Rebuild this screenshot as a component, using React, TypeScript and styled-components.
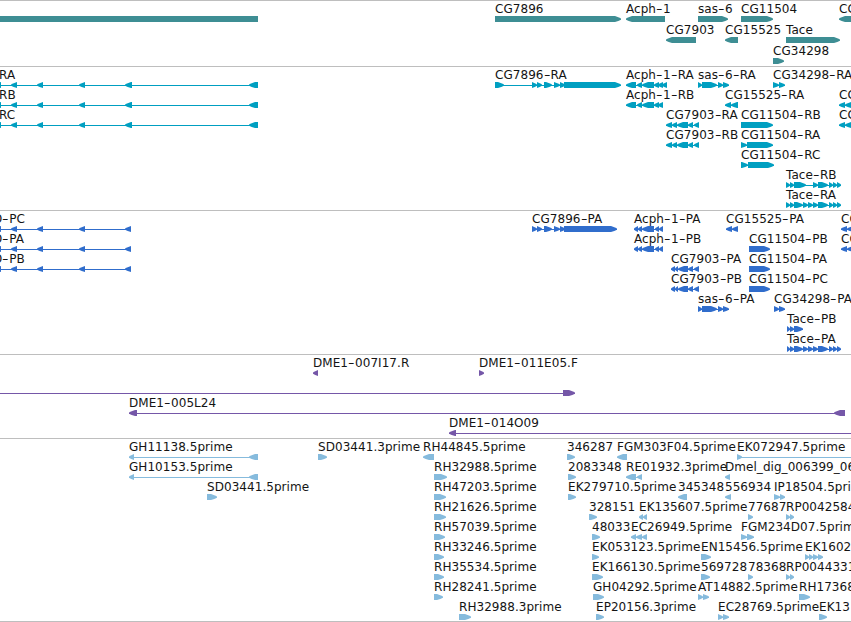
import React from 'react';
import styled, { createGlobalStyle } from 'styled-components';

type Strand = 'left' | 'right';
type Exon = [number, number];

interface Feature {
  label?: string;
  labelX?: number;
  strand: Strand;
  exons: Exon[];
}

interface TrackData {
  name: string;
  color: string;
  laneHeight: number;
  gap: number;
  lanes: Feature[][];
}

const VIEW_WIDTH = 851;
const HEAD = 6;

const GlobalStyle = createGlobalStyle`
  body {
    margin: 0;
    background: #fff;
    overflow: hidden;
  }
`;

const Browser = styled.main`
  width: ${VIEW_WIDTH}px;
  height: 622px;
  overflow: hidden;
  border-bottom: 1px solid #bebebe;
  box-sizing: border-box;
  font-family: 'DejaVu Sans', Verdana, sans-serif;
  font-size: 12px;
  color: #141414;
`;

const Track = styled.section<{ $gap: number }>`
  border-top: 1px solid #bebebe;
  padding-bottom: ${({ $gap }) => $gap}px;
`;

const Lane = styled.div<{ $height: number }>`
  position: relative;
  height: ${({ $height }) => $height}px;
  padding-top: 15px;
  box-sizing: border-box;
`;

const Label = styled.span`
  position: absolute;
  top: 1px;
  line-height: 15px;
  letter-spacing: 0.05px;
  white-space: pre;
`;

const Dash = styled.span`
  display: inline-block;
  width: 7px;
  transform: scaleX(1.5);
  transform-origin: 0 50%;
`;

const Glyphs = styled.svg`
  display: block;
  overflow: hidden;
`;

const f = (label: string | undefined, strand: Strand, ...exons: Exon[]): Feature => ({ label, strand, exons });

const longGene: Exon[] = [[-5, 1], [11, 17], [37, 43], [79, 85], [125, 132], [249, 258]];
const longCds: Exon[] = [[-5, 1], [11, 17], [37, 43], [79, 85], [125, 131]];
const acph: Exon[] = [[626, 636], [637, 642], [642, 654], [654, 659], [658, 663]];
const acphCds: Exon[] = [[634, 638], [638, 642], [642, 654], [655, 659], [659, 663]];
const cg7903: Exon[] = [[666, 672], [672, 677], [677, 688], [688, 693], [694, 699]];
const cg7903Cds: Exon[] = [[671, 675], [675, 678], [678, 688], [688, 693], [694, 699]];
const sas6: Exon[] = [[698, 702], [702, 717], [718, 723], [723, 729]];
const taceEnd: Exon[] = [[813, 818], [818, 828], [829, 833], [833, 837], [837, 841]];
const taceMid: Exon[] = [[794, 803], [803, 808], [808, 813]];

const tracks: TrackData[] = [
  {
    name: 'Genes',
    color: '#3e8e94',
    laneHeight: 21,
    gap: 2,
    lanes: [
      [
        { strand: 'left', exons: [[-20, 258]] },
        f('CG7896', 'right', [495, 621]),
        f('Acph-1', 'left', [626, 665]),
        f('sas-6', 'right', [698, 728]),
        f('CG11504', 'right', [741, 773]),
        f('CG', 'left', [839, 870]),
      ],
      [
        f('CG7903', 'left', [666, 696]),
        f('CG15525', 'left', [725, 738]),
        f('Tace', 'right', [786, 840]),
      ],
      [f('CG34298', 'right', [773, 784])],
    ],
  },
  {
    name: 'Transcripts',
    color: '#009fc1',
    laneHeight: 20,
    gap: 3,
    lanes: [
      [
        { label: 'RA', labelX: -1, strand: 'left', exons: longGene },
        f('CG7896-RA', 'right', [495, 504], [532, 537], [537, 542], [544, 552], [554, 560], [560, 565], [564, 621]),
        f('Acph-1-RA', 'left', ...acph, [662, 667]),
        f('sas-6-RA', 'right', ...sas6),
        f('CG34298-RA', 'right', [773, 779], [779, 785]),
      ],
      [
        { label: 'RB', labelX: -1, strand: 'left', exons: longGene },
        f('Acph-1-RB', 'left', ...acph),
        f('CG15525-RA', 'left', [725, 731], [731, 738]),
        f('CG', 'left', [839, 845], [845, 851]),
      ],
      [
        { label: 'RC', labelX: -1, strand: 'left', exons: longGene },
        f('CG7903-RA', 'left', ...cg7903),
        f('CG11504-RB', 'right', [741, 773]),
        f('CG', 'left', [839, 845], [845, 851]),
      ],
      [f('CG7903-RB', 'left', ...cg7903), f('CG11504-RA', 'right', [741, 747], [747, 773])],
      [f('CG11504-RC', 'right', [741, 748], [748, 774])],
      [f('Tace-RB', 'right', [786, 790], [790, 794], [794, 806], ...taceEnd)],
      [f('Tace-RA', 'right', [786, 790], [790, 794], ...taceMid, ...taceEnd)],
    ],
  },
  {
    name: 'CDS',
    color: '#306dcc',
    laneHeight: 20,
    gap: 3,
    lanes: [
      [
        { label: 'D-PC', labelX: -7, strand: 'left', exons: longCds },
        f('CG7896-PA', 'right', [532, 537], [537, 542], [544, 552], [554, 560], [560, 565], [564, 617]),
        f('Acph-1-PA', 'left', ...acphCds),
        f('CG15525-PA', 'left', [726, 732], [732, 738]),
        f('CG', 'left', [841, 847], [847, 853]),
      ],
      [
        { label: 'D-PA', labelX: -7, strand: 'left', exons: longCds },
        f('Acph-1-PB', 'left', ...acphCds),
        f('CG11504-PB', 'right', [749, 770]),
        f('CG', 'left', [841, 847], [847, 853]),
      ],
      [
        { label: 'D-PB', labelX: -7, strand: 'left', exons: longCds },
        f('CG7903-PA', 'left', ...cg7903Cds),
        f('CG11504-PA', 'right', [749, 770]),
      ],
      [f('CG7903-PB', 'left', ...cg7903Cds), f('CG11504-PC', 'right', [749, 770])],
      [f('sas-6-PA', 'right', ...sas6), f('CG34298-PA', 'right', [774, 779], [779, 785])],
      [f('Tace-PB', 'right', [787, 790], [790, 794], [794, 803])],
      [f('Tace-PA', 'right', [787, 790], [790, 794], ...taceMid, ...taceEnd)],
    ],
  },
  {
    name: 'BAC ends',
    color: '#7557a8',
    laneHeight: 20,
    gap: 3,
    lanes: [
      [f('DME1-007I17.R', 'left', [313, 318]), f('DME1-011E05.F', 'right', [479, 484])],
      [f(undefined, 'right', [-20, -10], [563, 575])],
      [f('DME1-005L24', 'left', [129, 137], [834, 845])],
      [f('DME1-014O09', 'left', [449, 456], [860, 870])],
    ],
  },
  {
    name: 'ESTs',
    color: '#86bbdd',
    laneHeight: 20,
    gap: 2,
    lanes: [
      [
        f('GH11138.5prime', 'left', [129, 134], [249, 258]),
        f('SD03441.3prime', 'right', [318, 327]),
        f('RH44845.5prime', 'left', [423, 434]),
        f('346287', 'right', [567, 575]),
        f('FGM303F04.5prime', 'left', [617, 627]),
        f('EK072947.5prime', 'right', [737, 742], [860, 870]),
      ],
      [
        f('GH10153.5prime', 'left', [129, 134], [249, 258]),
        f('RH32988.5prime', 'right', [434, 447]),
        f('2083348', 'right', [568, 576]),
        f('RE01932.3prime', 'left', [626, 636], [637, 642]),
        f('Dmel_dig_006399_06', 'left', [725, 730]),
      ],
      [
        f('SD03441.5prime', 'right', [207, 217]),
        f('RH47203.5prime', 'right', [434, 446]),
        f('EK279710.5prime', 'right', [568, 576]),
        f('345348', 'left', [678, 687]),
        f('556934', 'left', [725, 731]),
        f('IP18504.5prime', 'right', [774, 780], [780, 785]),
      ],
      [
        f('RH21626.5prime', 'right', [434, 446]),
        f('328151', 'right', [589, 597]),
        f('EK135607.5prime', 'left', [639, 643], [643, 647]),
        f('77687', 'right', [748, 753]),
        f('RP0042584', 'right', [786, 790], [790, 794]),
      ],
      [
        f('RH57039.5prime', 'right', [434, 445]),
        f('48033', 'right', [592, 600]),
        f('EC26949.5prime', 'left', [631, 636], [636, 642], [642, 647]),
        f('FGM234D07.5prime', 'right', [741, 747], [747, 754]),
      ],
      [
        f('RH33246.5prime', 'right', [434, 444]),
        f('EK053123.5prime', 'right', [592, 599]),
        f('EN15456.5prime', 'right', [701, 711]),
        f('EK1602', 'right', [805, 809], [809, 813], [813, 818], [818, 823]),
      ],
      [
        f('RH35534.5prime', 'right', [434, 444]),
        f('EK166130.5prime', 'right', [592, 603]),
        f('569728', 'right', [701, 710]),
        f('78368', 'right', [748, 753]),
        f('RP0044331', 'right', [786, 790], [790, 794]),
      ],
      [
        f('RH28241.5prime', 'right', [434, 443]),
        f('GH04292.5prime', 'right', [593, 604]),
        f('AT14882.5prime', 'right', [698, 703], [703, 709]),
        f('RH17368', 'right', [799, 810]),
      ],
      [
        f('RH32988.3prime', 'right', [459, 471]),
        f('EP20156.3prime', 'right', [596, 604]),
        f('EC28769.5prime', 'right', [718, 723], [723, 729]),
        f('EK13', 'right', [819, 827]),
      ],
    ],
  },
];

// Exon box with a pointed end on the side the strand runs to
const exonPoints = ([start, end]: Exon, strand: Strand) => {
  const head = Math.min(HEAD, end - start);
  const [tail, tip, dir] = strand === 'right' ? [start, end, 1] : [end, start, -1];
  const neck = tip - dir * head;
  const mid = tip - dir * head * 0.45;
  return `${tail},0 ${neck},0 ${mid},1.2 ${tip},2.4 ${tip},3.8 ${mid},4.9 ${neck},6 ${tail},6`;
};

// Hyphens are drawn a little wider than the font has them
const renderLabel = (label: string) =>
  label.split('-').map((part, i) => (
    <React.Fragment key={i}>
      {i > 0 && <Dash>-</Dash>}
      {part}
    </React.Fragment>
  ));

const FeatureGlyph: React.FC<{ feature: Feature; color: string }> = ({ feature, color }) => {
  const { exons, strand } = feature;
  const start = exons[0][0];
  const end = exons[exons.length - 1][1];

  return (
    <g fill={color}>
      {exons.length > 1 && <rect x={start} y={3} width={end - start} height={1} />}
      {exons.map((exon, i) => (
        <polygon key={i} points={exonPoints(exon, strand)} />
      ))}
    </g>
  );
};

const App: React.FC = () => (
  <>
    <GlobalStyle />
    <Browser>
      {tracks.map(track => (
        <Track key={track.name} $gap={track.gap} aria-label={track.name}>
          {track.lanes.map((features, lane) => (
            <Lane key={lane} $height={track.laneHeight}>
              {features.map((feature, i) =>
                feature.label ? (
                  <Label key={i} style={{ left: feature.labelX ?? feature.exons[0][0] }}>
                    {renderLabel(feature.label)}
                  </Label>
                ) : null
              )}
              <Glyphs width={VIEW_WIDTH} height={6}>
                {features.map((feature, i) => (
                  <FeatureGlyph key={i} feature={feature} color={track.color} />
                ))}
              </Glyphs>
            </Lane>
          ))}
        </Track>
      ))}
    </Browser>
  </>
);

export default App;
